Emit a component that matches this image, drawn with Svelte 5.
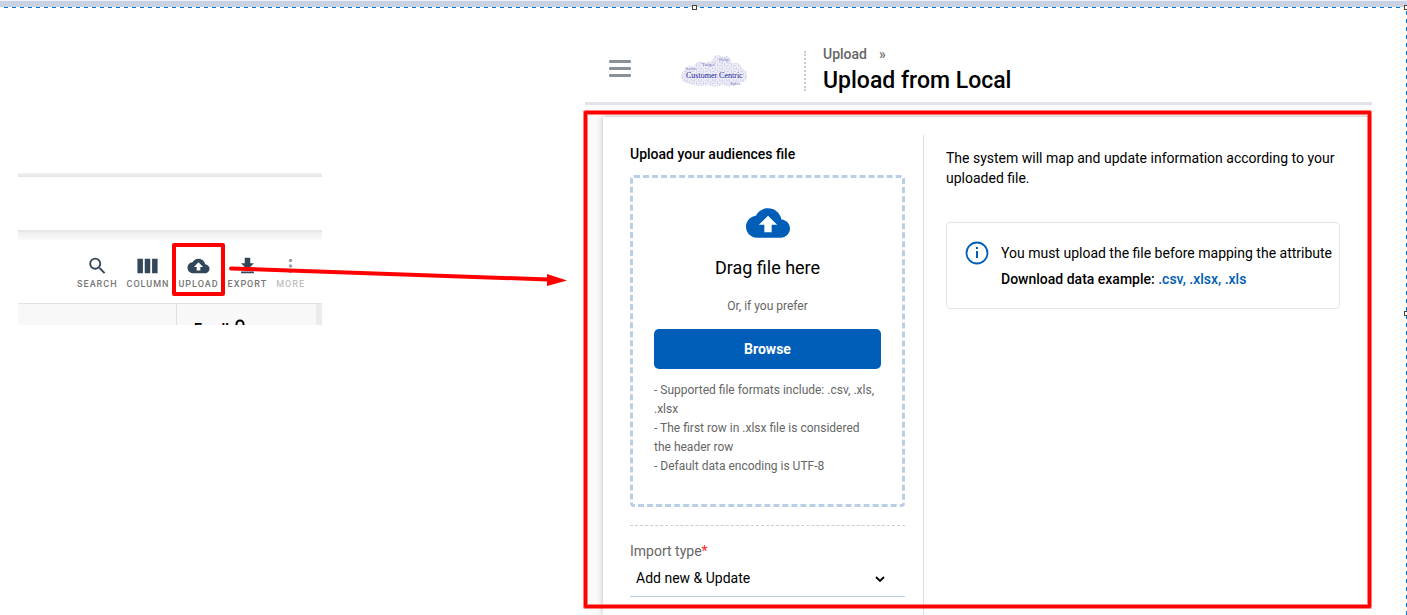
<script>
  const cloud = 'M19.35 10.04C18.67 6.59 15.64 4 12 4 9.11 4 6.6 5.64 5.35 8.04 2.34 8.36 0 10.91 0 14c0 3.31 2.69 6 6 6h13c2.76 0 5-2.24 5-5 0-2.64-2.05-4.78-4.65-4.96zM14 13v4h-4v-4H7l5-5 5 5h-3z';
  const tools = [
    { label: 'SEARCH', d: 'M15.5 14h-.79l-.28-.27A6.47 6.47 0 0 0 16 9.5 6.5 6.5 0 1 0 9.5 16c1.61 0 3.09-.59 4.23-1.57l.27.28v.79l5 4.99L20.49 19l-4.99-5zm-6 0C7.01 14 5 11.99 5 9.5S7.01 5 9.5 5 14 7.01 14 9.5 11.99 14 9.5 14z' },
    { label: 'COLUMN', d: 'M1 4h6v16H1zM9 4h6v16H9zM17 4h6v16h-6z' },
    { label: 'UPLOAD', d: cloud },
    { label: 'EXPORT', d: 'M19 9h-4V3H9v6H5l7 7 7-7zM5 18v2h14v-2H5z' },
    { label: 'MORE', muted: true, d: 'M12 8a2 2 0 1 0 0-4 2 2 0 0 0 0 4zm0 2a2 2 0 1 0 0 4 2 2 0 0 0 0-4zm0 6a2 2 0 1 0 0 4 2 2 0 0 0 0-4z' }
  ];
  const formats = ['.csv', '.xlsx', '.xls'];
  const words = [
    [39, 6, 5, 'Help'], [22, 11, 5, 'Target'], [5, 15, 4, 'Service'], [50, 30, 5, 'Sales']
  ];
  const puff = 'M8 28C2 28 0 24 1 20c0-3 3-5 5-5 0-4 4-5 8-4 2-5 7-5 11-3C27 7 33 7 34 2c2-3 6-2 8 0 4-2 9-1 10 6 6-1 10 2 10 6 4 1 6 4 5 8 0 4-4 5-8 6-4 4-11 4-16 2-6 2-11 2-15 0-6 2-15 1-20-2z';
</script>

<div class="page">
  <div class="topbar"></div>
  <div class="board">
    <section class="snippet">
      <div class="strip"></div>
      <div class="blank"></div>
      <div class="shade"></div>
      <div class="tools">
        {#each tools as t}
          <button class="tool" class:muted={t.muted}>
            <svg viewBox="0 0 24 24" width="23" height="23"><path d={t.d} /></svg>
            <span>{t.label}</span>
          </button>
        {/each}
      </div>
      <div class="cells">
        <div class="cell"></div>
        <div class="cell mail">
          <span>Email</span>
          <svg viewBox="0 0 12 16" width="12" height="16"><path d="M2.500 8V5a3.500 3.500 0 0 1 7 0v3" fill="none" stroke="#000" stroke-width="2" /><path d="M1 8h10v8H1z" /></svg>
        </div>
        <div class="bar"></div>
      </div>
    </section>

    <main class="app">
      <header>
        <button class="menu" aria-label="Menu"><i></i><i></i><i></i></button>
        <svg class="logo" viewBox="0 0 68 34" width="68" height="34">
          <defs>
            <pattern id="weave" width="7" height="6" patternUnits="userSpaceOnUse">
              <path d="M.5 0v3M2.500 2v4M4.500 0v2M4 4.500h3M6 1v2" stroke="#9a9acb" stroke-opacity=".4" stroke-width=".7" fill="none" />
            </pattern>
          </defs>
          <path d={puff} fill="#ededf7" />
          <path d={puff} fill="url(#weave)" />
          {#each words as [x, y, size, word]}
            <text {x} {y} font-size={size} fill="#7474bd">{word}</text>
          {/each}
          <text x="6" y="23" font-size="8" fill="#26269a">Customer Centric</text>
        </svg>
        <div class="titles">
          <nav><a href="#upload">Upload</a><span>»</span></nav>
          <h1>Upload from Local</h1>
        </div>
      </header>

      <div class="body">
        <div class="panel">
          <div class="left">
            <h2>Upload your audiences file</h2>
            <div class="drop">
              <svg viewBox="0 0 24 24" width="44" height="44"><path d={cloud} /></svg>
              <p class="drag">Drag file here</p>
              <p class="or">Or, if you prefer</p>
              <button class="browse">Browse</button>
              <p class="notes">- Supported file formats include: .csv, .xls, .xlsx<br />- The first row in .xlsx file is considered<br />the header row<br />- Default data encoding is UTF-8</p>
            </div>
            <div class="field">
              <label for="import-type">Import type<b>*</b></label>
              <div class="select">
                <select id="import-type"><option>Add new &amp; Update</option></select>
                <svg viewBox="0 0 10 6" width="10" height="6"><path d="M1 1l4 4 4-4" fill="none" stroke="#000" stroke-width="1.800" /></svg>
              </div>
            </div>
          </div>
          <div class="right">
            <p>The system will map and update information according to your uploaded file.</p>
            <div class="info">
              <svg viewBox="0 0 24 24" width="24" height="24"><circle cx="12" cy="12" r="10.500" fill="none" stroke="#005eb8" stroke-width="1.800" /><path d="M11 6h2v2h-2zM11 10h2v7h-2z" /></svg>
              <div>
                <p>You must upload the file before mapping the attribute</p>
                <p class="download">Download data example: {#each formats as f, i}<a href={'#' + f}>{f}{i < 2 ? ',' : ''}</a>{' '}{/each}</p>
              </div>
            </div>
          </div>
        </div>
        <div class="frame"></div>
      </div>
    </main>
  </div>

  <div class="target"></div>
  <svg class="arrow" viewBox="0 0 340 24" width="340" height="24">
    <path d="M3 5.500L320 16.500" stroke="#f00" stroke-width="4" stroke-linecap="round" />
    <path d="M319 11l20 6.500-20 5.500z" fill="#f00" />
  </svg>
  <div class="edge-top"></div>
  <div class="edge-right"></div>
  <i class="handle top"></i>
  <i class="handle corner"></i>
  <i class="handle side"></i>
</div>

<style>
  :global(body) { margin: 0; background: #fff; }
  .page {
    position: relative; min-height: 100vh; overflow: hidden;
    font: 14px/20px Roboto, "Open Sans", sans-serif; color: #000;
    display: flex; flex-direction: column;
  }
  .page, .page * { box-sizing: border-box; }
  p, h1, h2 { margin: 0; }
  button { font-family: inherit; border: 0; background: none; padding: 0; }
  a { text-decoration: none; color: inherit; }
  .topbar { height: 7px; background: #c8d2e2; border-top: 1px solid #eef1f6; }
  .board { display: flex; flex: 1; padding: 0 35px 0 18px; gap: 263px; }

  .snippet { width: 304px; flex: none; margin-top: 166px; }
  .strip { height: 4px; background: linear-gradient(#f3f3f3, #e4e4e4); }
  .blank { height: 53px; }
  .shade { height: 10px; background: linear-gradient(#e2e2e2, #f1f1f1 3px, #fafafa); }
  .tools { height: 63px; display: flex; justify-content: flex-end; gap: 9px; padding: 15px 17px 0 0; }
  .tool { display: flex; flex-direction: column; align-items: center; height: 36px; color: #777; font-size: 9px; font-weight: 500; line-height: 14px; letter-spacing: 1px; }
  .tool svg { fill: #33475b; }
  .muted { color: #c0c0c0; }
  .muted svg { fill: #99a3ad; }
  .cells { height: 22px; overflow: hidden; display: flex; border-top: 1px solid #e3e3e3; background: #f8f8f8; }
  .cell { width: 158px; flex: none; }
  .mail { flex: 1; border-left: 1px solid #e0e0e0; padding: 15px 0 0 17px; font-size: 14px; line-height: 20px; font-weight: 700; display: flex; gap: 5px; align-items: flex-start; }
  .bar { width: 6px; background: #ebebeb; }

  .app { flex: 1; min-width: 0; display: flex; flex-direction: column; }
  header { height: 98px; display: flex; align-items: flex-start; border-bottom: 3px solid #e2e2e9; padding: 36px 0 0 24px; }
  .menu { width: 22px; margin-top: 17px; display: flex; flex-direction: column; gap: 4px; }
  .menu i { height: 3px; border-radius: 1px; background: #8a9299; }
  .logo { margin: 12px 0 0 49px; font-family: "Liberation Serif", serif; }
  .titles { margin: 8px 0 0 56px; border-left: 2px dotted #ccc; height: 40px; padding-left: 17px; }
  nav { margin-top: -7px; display: flex; gap: 12px; color: #666; font-weight: 500; }
  h1 { font-size: 23px; font-weight: 500; line-height: 30px; margin-top: 2px; white-space: nowrap; }

  .body { flex: 1; position: relative; background: #fafafa; padding: 12px 0 0 18px; display: flex; }
  .panel { flex: 1; min-width: 0; background: #fff; box-shadow: 0 0 6px rgba(0, 0, 0, .25); display: flex; clip-path: inset(-8px 0 0 -12px); padding-top: 18px; }
  .left { flex: 0 0 321px; padding: 0 18px 0 27px; border-right: 1px solid #dedede; }
  h2 { font-size: 14px; font-weight: 500; line-height: 20px; margin: 9px 0 11px; }
  .drop { border: 3px dashed #b8cfe6; border-radius: 4px; height: 332px; padding: 23px 21px 0; display: flex; flex-direction: column; align-items: center; }
  .drop svg { fill: #005eb8; }
  .drag { font-size: 18px; line-height: 24px; margin-top: 11px; }
  .or { font-size: 12px; line-height: 18px; margin-top: 17px; color: #666; }
  .browse { align-self: stretch; height: 40px; margin-top: 14px; border-radius: 5px; background: #005eb8; color: #fff; font-size: 14px; font-weight: 700; }
  .notes { align-self: stretch; margin-top: 12px; font-size: 12px; line-height: 19px; color: #666; }
  .field { border-top: 1px dashed #ccc; margin-top: 18px; padding-top: 15px; }
  label { display: block; color: #666; }
  b { color: #f22; font-weight: 400; }
  .select { display: flex; align-items: center; border-bottom: 1px solid #b8cfe6; height: 36px; padding-right: 20px; }
  select { flex: 1; appearance: none; border: 0; background: none; font: inherit; color: #000; padding: 0 0 2px 6px; }

  .right { flex: 1; min-width: 0; padding: 13px 32px 0 22px; }
  .info { display: flex; gap: 12px; margin-top: 34px; border: 1px solid #e4e4e4; border-radius: 4px; padding: 20px 4px 19px 18px; }
  .info svg { flex: none; fill: #005eb8; margin: -2px 0 0; }
  .download { margin-top: 6px; font-weight: 500; }
  .download a { color: #005eb8; }

  .frame { position: absolute; left: -1px; right: 1px; top: 6px; bottom: 7px; border: 3px solid #f00; border-radius: 1px; box-shadow: 0 0 0 1px #ff000080, inset 0 0 0 1px #ff000080; }
  .target { position: absolute; left: 172px; top: 243px; width: 53px; height: 53px; border: 4px solid #f00; border-radius: 2px; }
  .arrow { position: absolute; left: 228px; top: 263px; fill: none; }
  .edge-top { position: absolute; left: 0; right: 0; top: 7px; height: 1px; background: repeating-linear-gradient(90deg, #fff 0 4px, #0078d7 4px 8px); }
  .edge-right { position: absolute; top: 7px; bottom: 0; right: 0; width: 1px; background: repeating-linear-gradient(#fff 0 4px, #0078d7 4px 8px); }
  .handle { position: absolute; width: 5px; height: 5px; background: #fff; border: 1px solid #444; }
  .handle.top { left: 692px; top: 5px; }
  .handle.corner { right: -2px; top: 5px; }
  .handle.side { right: -2px; top: 311px; }
</style>
